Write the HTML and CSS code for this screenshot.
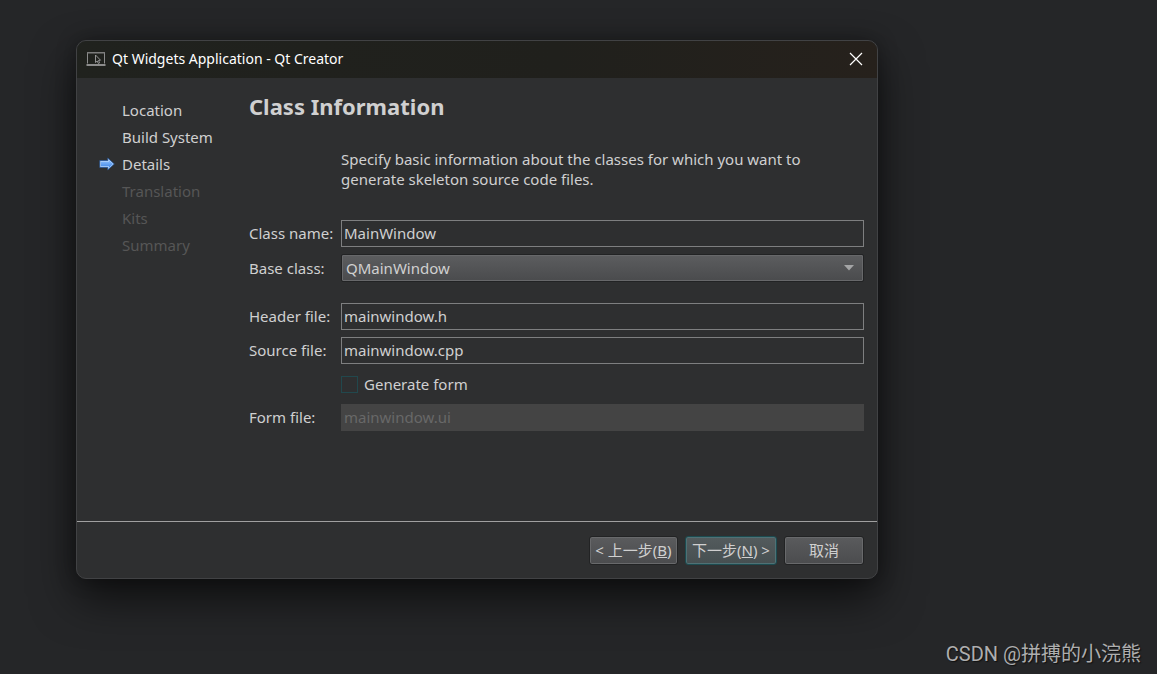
FILE: index.html
```html
<!DOCTYPE html>
<html lang="en">
<head>
<meta charset="utf-8">
<meta name="viewport" content="width=device-width, initial-scale=1">
<title>Qt Widgets Application - Qt Creator</title>
<link rel="stylesheet" href="styles.css">
</head>
<body>
<main class="dialog">
  <header class="titlebar">
    <svg class="app-icon" width="20" height="16" viewBox="0 0 20 16" fill="none" aria-hidden="true">
      <path d="M1.500 12.500v-11h17v11" stroke="#8c8c8c" />
      <path d="M1 1h18v1.600H1z" fill="#7c7c7c" />
      <path d="M.5 13h19v2H.5z" fill="#8c8c8c" />
      <path d="M9.500 4v7.500l1.700-1.500 1.200 2.500 1.200-.6-1.100-2.400 2-.3z" stroke="#a0a0a0" stroke-width=".9" />
    </svg>
    <h1 class="title">Qt Widgets Application - Qt Creator</h1>
    <button class="close" type="button" aria-label="Close">
      <svg width="14" height="14" viewBox="0 0 14 14" fill="none"><path d="M1 1l12 12M13 1L1 13" stroke="#fff" stroke-width="1.200" /></svg>
    </button>
  </header>
  <div class="body">
    <ol class="steps">
      <li class="step">Location</li>
      <li class="step">Build System</li>
      <li class="step current" aria-current="step">
        <svg class="arrow" width="16" height="14" viewBox="0 0 16 14" aria-hidden="true">
          <defs><linearGradient id="blue" x1="0" y1="0" x2="0" y2="1"><stop offset="0" stop-color="#8fc0ff" /><stop offset="1" stop-color="#3f86e6" /></linearGradient></defs>
          <path d="M.8 3.500h8V1l6.500 6-6.500 6v-2.500h-8z" fill="#b4d4fb" stroke="#23508f" stroke-width=".8" />
          <path d="M2 4.700h8V3.200L14 7l-4 3.800V9.300H2z" fill="url(#blue)" />
        </svg>Details</li>
      <li class="step pending">Translation</li>
      <li class="step pending">Kits</li>
      <li class="step pending">Summary</li>
    </ol>
    <form class="content" id="class-form">
      <h2 class="heading">Class Information</h2>
      <div class="fields">
        <p class="intro">Specify basic information about the classes for which you want to generate skeleton source code files.</p>
        <label class="name" for="class-name">Class name:</label>
        <input class="field" id="class-name" type="text" value="MainWindow">
        <label for="base-class">Base class:</label>
        <div class="select-box">
          <select class="combo" id="base-class"><option>QMainWindow</option></select>
          <svg class="caret" width="10" height="6" viewBox="0 0 10 6" aria-hidden="true"><path d="M0 0h10L5 5.500z" fill="#a4a5a6" /></svg>
        </div>
        <label class="name spaced" for="header-file">Header file:</label>
        <input class="field spaced" id="header-file" type="text" value="mainwindow.h">
        <label class="name" for="source-file">Source file:</label>
        <input class="field" id="source-file" type="text" value="mainwindow.cpp">
        <label class="check"><input class="box" type="checkbox">Generate form</label>
        <label class="name" for="form-file">Form file:</label>
        <input class="field" id="form-file" type="text" value="mainwindow.ui" disabled>
      </div>
    </form>
  </div>
  <footer class="actions">
    <button class="btn back" type="button">&lt; 上一步(<u>B</u>)</button>
    <button class="btn next" type="submit" form="class-form">下一步(<u>N</u>) &gt;</button>
    <button class="btn cancel" type="button">取消</button>
  </footer>
</main>
<p class="watermark">CSDN @拼搏的小浣熊</p>
</body>
</html>
```
FILE: styles.css
```css
* {
  box-sizing: border-box;
}

body {
  margin: 0;
  min-height: 100vh;
  padding: 40px 16px 4px 76px;
  display: flex;
  flex-direction: column;
  background: #252628;
  color: #d0d0d0;
  font: 15px/20px "Noto Sans", "Noto Sans CJK SC", sans-serif;
}

h1, h2, p, ol {
  margin: 0;
  padding: 0;
}

input, select, button {
  font: inherit;
  color: inherit;
}

.dialog {
  width: 100%;
  max-width: 802px;
  border: 1px solid #414244;
  border-radius: 10px;
  background: #2e2f30;
  overflow: hidden;
  box-shadow: 0 20px 44px rgba(0, 0, 0, .6), 0 0 20px rgba(0, 0, 0, .3);
}

.titlebar {
  display: flex;
  align-items: center;
  height: 37px;
  padding: 0 7px 1px 9px;
  background: linear-gradient(90deg, #20221e, #20201c 60%, #26211c);
}

.title {
  flex: 1;
  margin-left: 6px;
  color: #fff;
  font-size: 14px;
  font-weight: 400;
}

.close {
  display: grid;
  place-items: center;
  width: 28px;
  height: 28px;
  padding: 0;
  border: 0;
  background: none;
}

.body {
  display: flex;
  min-height: 443px;
}

.steps {
  flex: none;
  width: 172px;
  padding: 19px 0 0 45px;
  list-style: none;
}

.step {
  position: relative;
  line-height: 27px;
}

.pending {
  color: #565656;
}

.arrow {
  position: absolute;
  left: -23px;
  top: 6px;
}

.content {
  flex: 1;
  padding: 14px 13px 0 0;
}

.heading {
  margin-bottom: 29px;
  font-size: 22px;
  line-height: 28px;
}

.fields {
  display: grid;
  grid-template-columns: 92px 1fr;
  row-gap: 7px;
  align-items: center;
}

.intro {
  grid-column: 2;
  max-width: 500px;
  margin-bottom: 24px;
}

.name {
  padding-bottom: 2px;
}

.field {
  width: 100%;
  height: 27px;
  padding: 0 2px 2px;
  border: 1px solid #7e7f80;
  background: transparent;
}

.field:disabled {
  border-color: #444;
  background: #444;
  color: #686868;
}

.spaced {
  margin-top: 14px;
}

.select-box {
  position: relative;
}

.combo {
  display: block;
  appearance: none;
  width: 100%;
  height: 28px;
  padding: 0 24px 0 4px;
  border: 1px solid #222324;
  border-radius: 2px;
  background: linear-gradient(#5c5d5f, #4a4b4d);
  box-shadow: inset 0 0 0 1px #67686a;
}

.caret {
  position: absolute;
  right: 10px;
  top: 11px;
  pointer-events: none;
}

.check {
  grid-column: 2;
  display: flex;
  align-items: center;
  gap: 6px;
  height: 26px;
}

.box {
  appearance: none;
  width: 17px;
  height: 17px;
  margin: 0;
  border: 1px solid #21484d;
}

.box:checked {
  background: #2c7f88;
}

.actions {
  display: flex;
  justify-content: flex-end;
  gap: 7px;
  padding: 14px 13px 13px;
  border-top: 1px solid #a0a0a0;
}

.btn {
  height: 29px;
  padding: 0 0 2px;
  border: 1px solid #222324;
  border-radius: 3px;
  background: linear-gradient(#5a5b5d, #4b4c4e);
  box-shadow: inset 0 0 0 1px #68696b;
  white-space: nowrap;
}

.back {
  width: 89px;
}

.next {
  width: 92px;
  border-color: #1c4b50;
  background: linear-gradient(#535b5d, #464f51);
  box-shadow: inset 0 0 0 1px #4f7175;
}

.cancel {
  width: 80px;
}

.watermark {
  margin-top: auto;
  align-self: flex-end;
  color: #aeaeaf;
  font: 20px/32px Roboto, "Noto Sans CJK SC", sans-serif;
  text-shadow: 1px 1px 1px #111;
}
```
